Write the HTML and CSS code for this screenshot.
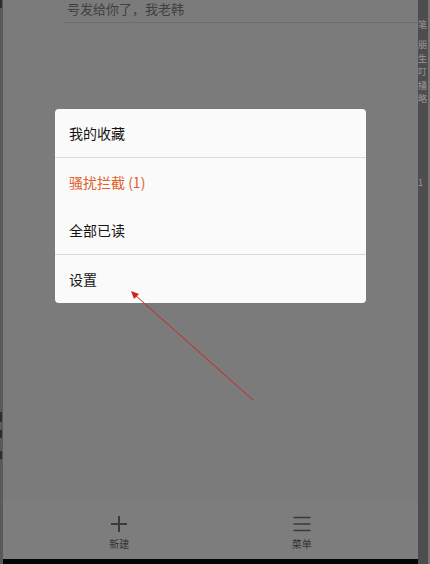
FILE: index.html
```html
<!DOCTYPE html>
<html>
<head>
<meta charset="utf-8">
<link rel="stylesheet" href="styles.css">
</head>
<body>
<div class="screen">
  <div class="edge-left">
    <span class="mark m1"></span>
    <span class="mark m2"></span>
    <span class="mark m3"></span>
    <span class="mark m4"></span>
  </div>
  <div class="main">
    <div class="content">
      <div class="msg">号发给你了，我老韩</div>
    </div>
    <nav class="nav">
      <div class="nav-item">
        <svg width="18" height="18" viewBox="0 0 18 18"><path d="M9 1v16M1 9h16" stroke="#3a3a3a" stroke-width="2" fill="none"/></svg>
        <span>新建</span>
      </div>
      <div class="nav-item">
        <svg width="18" height="18" viewBox="0 0 18 18"><path d="M0.5 2.5h17M0.5 9h17M0.5 15.5h17" stroke="#3a3a3a" stroke-width="1.5" fill="none"/></svg>
        <span>菜单</span>
      </div>
    </nav>
    <div class="black"></div>
  </div>
  <div class="edge-right">
    <span class="frag f1">笔</span>
    <span class="frag f2">朋</span>
    <span class="frag f3">生</span>
    <span class="frag f4">叮</span>
    <span class="frag f5">播</span>
    <span class="frag f6">略</span>
    <span class="frag f7">1</span>
  </div>

  <div class="menu">
    <div class="item">我的收藏</div>
    <div class="item hot">骚扰拦截 (1)</div>
    <div class="item plain">全部已读</div>
    <div class="item last">设置</div>
  </div>

  <svg class="arrow" width="430" height="564" viewBox="0 0 430 564">
    <line x1="253" y1="400" x2="135" y2="295" stroke="#d42020" stroke-width="1"/>
    <path d="M131 291 L139 294 L134 299 Z" fill="#d42020"/>
  </svg>
</div>
</body>
</html>
```
FILE: styles.css
```css
* { box-sizing: border-box; }
html, body { margin: 0; padding: 0; }
body {
  width: 430px;
  height: 564px;
  overflow: hidden;
  font-family: "Noto Sans CJK SC", "Noto Sans", sans-serif;
}
.screen {
  position: relative;
  width: 430px;
  height: 564px;
  display: flex;
  background: #7c7c7c;
}
.edge-left {
  position: relative;
  width: 3px;
  background: #5a5a5a;
  flex: none;
}
.mark {
  position: absolute;
  left: 0;
  width: 2px;
  background: #2e2e2e;
}
.m1 { top: 0; height: 8px; }
.m2 { top: 412px; height: 10px; }
.m3 { top: 430px; height: 8px; }
.m4 { top: 451px; height: 8px; }
.main {
  flex: 1;
  display: flex;
  flex-direction: column;
  background: #7b7b7b;
}
.content {
  flex: 1;
  padding: 0 0 0 61px;
}
.msg {
  height: 24px;
  padding: 0 0 0 3px;
  line-height: 20px;
  font-size: 13px;
  color: #3f3f3f;
  border-bottom: 1px solid #6e6e6e;
  margin-top: -1px;
}
.nav {
  height: 57px;
  display: grid;
  grid-template-columns: 1fr 1fr;
  padding: 0 25px;
  background: #7d7d7d;
  border-top: 1px solid #7f7f7f;
}
.nav-item {
  display: flex;
  flex-direction: column;
  align-items: center;
  padding-top: 12px;
  gap: 4px;
}
.nav-item span {
  font-size: 10px;
  line-height: 14px;
  color: #333;
}
.black {
  height: 5px;
  background: #050505;
}
.edge-right {
  position: relative;
  width: 12px;
  flex: none;
  background: #4d4d4d;
  border-right: 2px solid #767676;
  overflow: hidden;
}
.frag {
  position: absolute;
  left: 0;
  font-size: 9px;
  line-height: 10px;
  color: #9a9a9a;
  white-space: nowrap;
}
.f1 { top: 20px; }
.f2 { top: 40px; }
.f3 { top: 54px; }
.f4 { top: 67px; }
.f5 { top: 81px; }
.f6 { top: 94px; }
.f7 { top: 178px; }
.menu {
  position: absolute;
  left: 55px;
  top: 109px;
  width: 311px;
  background: #fafafa;
  border-radius: 4px;
  overflow: hidden;
}
.item {
  height: 48.5px;
  line-height: 48px;
  padding-left: 14px;
  font-size: 14px;
  color: #141414;
}
.item:first-child { border-bottom: 1px solid #dadada; }
.plain { border-bottom: 1px solid #dadada; }
.hot { color: #e0602c; }
.arrow {
  position: absolute;
  left: 0;
  top: 0;
  pointer-events: none;
}
```
